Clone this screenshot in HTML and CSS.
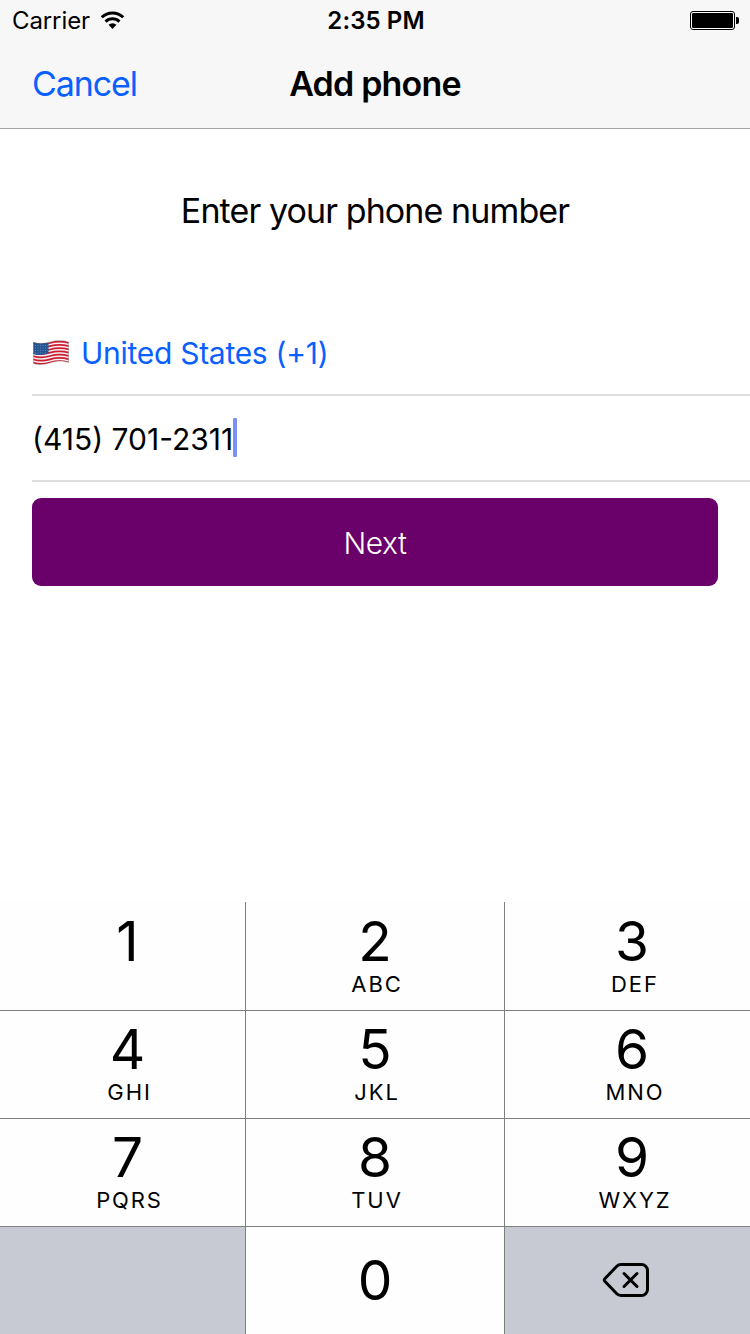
FILE: index.html
```html
<!DOCTYPE html>
<html lang="en">
<head>
<meta charset="utf-8">
<title>Add phone</title>
<link rel="stylesheet" href="styles.css">
</head>
<body>
<div class="screen">
  <header class="top">
    <div class="status">
      <div class="status-left">
        <span class="carrier">Carrier</span>
        <svg class="wifi" width="25" height="19" viewBox="0 0 26 20">
          <path d="M1.7 6.6a16.3 16.3 0 0 1 22.6 0" fill="none" stroke="#000" stroke-width="3.2"/>
          <path d="M5.700 11.1a10.6 10.6 0 0 1 14.6 0" fill="none" stroke="#000" stroke-width="3.2"/>
          <path d="M8.900 14.6a6 6 0 0 1 8.200 0L13 18.900z"/>
        </svg>
      </div>
      <span class="clock">2:35 PM</span>
      <svg class="battery" width="50" height="20" viewBox="0 0 50 20">
        <rect x=".5" y=".5" width="44" height="18" rx="2.5" fill="#fff" stroke="#000"/>
        <rect x="2" y="2" width="41" height="15" rx="1.2"/>
        <path d="M46 6h1a2 2 0 0 1 2 2v3a2 2 0 0 1-2 2h-1z"/>
      </svg>
    </div>
    <nav class="nav">
      <a class="cancel">Cancel</a>
      <h1 class="title">Add phone</h1>
    </nav>
  </header>
  <main class="form">
    <p class="prompt">Enter your phone number</p>
    <div class="row country">
      <svg class="flag" width="36" height="26" viewBox="0 0 36 26">
        <defs>
          <clipPath id="wave"><path d="M.5 2.300C6 4 11 3.800 17 2S29 0 35.500 2V22.500C29 20.500 24 20.800 18 22.600S6 25.500.5 23.500z"/></clipPath>
        </defs>
        <g clip-path="url(#wave)">
          <rect width="36" height="26" fill="#f4f1f2"/>
          <g fill="none" stroke="#d01c30" stroke-width="1.8">
            <path d="M0 3C6 5 11 4.800 17 3S29 1 36 3"/>
            <path d="M0 6.200C6 8.200 11 8 17 6.200S29 4.200 36 6.200"/>
            <path d="M0 9.500C6 11.500 11 11.300 17 9.500S29 7.500 36 9.500"/>
            <path d="M0 12.700C6 14.700 11 14.500 17 12.700S29 10.700 36 12.700"/>
            <path d="M0 16C6 18 11 17.800 17 16S29 14 36 16"/>
            <path d="M0 19.300C6 21.300 11 21.100 17 19.300S29 17.300 36 19.300"/>
            <path d="M0 22.600C6 24.600 11 24.400 17 22.600S29 20.600 36 22.600"/>
          </g>
          <path d="M0 0H15.500V13.600C10 15.200 5 15.400 0 14z" fill="#255493"/>
          <path d="M2 5.500H15M2 8H15M2 10.500H15M2 13H14" stroke="#86a4c9" stroke-width=".6" stroke-dasharray="1 1.500"/>
        </g>
        <path d="M.5 2.300C6 4 11 3.800 17 2S29 0 35.500 2V22.500C29 20.500 24 20.800 18 22.600S6 25.500.5 23.500z" fill="none" stroke="#555" stroke-opacity=".4" stroke-width=".8"/>
      </svg>
      <span class="country-name">United States (+1)</span>
    </div>
    <div class="row number"><span class="digits">(415) 701-2311</span><span class="caret"></span></div>
    <button class="next">Next</button>
  </main>
  <section class="keypad">
    <div class="key left first"><b>1</b></div>
    <div class="key mid first"><b>2</b><i>ABC</i></div>
    <div class="key right first"><b>3</b><i>DEF</i></div>
    <div class="key left"><b>4</b><i>GHI</i></div>
    <div class="key mid"><b>5</b><i>JKL</i></div>
    <div class="key right"><b>6</b><i>MNO</i></div>
    <div class="key left"><b>7</b><i>PQRS</i></div>
    <div class="key mid"><b>8</b><i>TUV</i></div>
    <div class="key right"><b>9</b><i>WXYZ</i></div>
    <div class="key left last gray"></div>
    <div class="key mid last"><b>0</b></div>
    <div class="key right last gray">
      <svg class="delete" width="48" height="36" viewBox="0 0 48 36" fill="none" stroke="#000" stroke-width="3" stroke-linecap="round" stroke-linejoin="round">
        <path d="M19 2.500H39.500a6 6 0 0 1 6 6V27.500a6 6 0 0 1-6 6H19q-2.500 0-4.200-1.700L2.800 19.200q-1.200-1.200 0-2.400L14.800 4.200Q16.500 2.500 19 2.500z"/>
        <path d="M22 11.500l13 13M35 11.500L22 24.500"/>
      </svg>
    </div>
  </section>
</div>
</body>
</html>
```
FILE: styles.css
```css
* { box-sizing: border-box; }
body { margin: 0; background: #fff; color: #000; font-family: Inter, "Liberation Sans", sans-serif; }
.screen { width: 750px; height: 1334px; display: flex; flex-direction: column; overflow: hidden; }

.top { height: 129px; background: #f7f7f7; border-bottom: 1px solid #a5a5a5; }
.status { height: 42px; padding: 0 10px 0 12px; display: grid; grid-template-columns: 1fr auto 1fr; align-items: center; font-size: 24px; line-height: 42px; }
.status-left { display: flex; align-items: center; }
.carrier { letter-spacing: -0.1px; }
.wifi { margin-left: 10px; margin-top: -1px; }
.clock { font-weight: 600; letter-spacing: 0.1px; }
.battery { justify-self: end; }
.nav { height: 84px; padding: 0 32px; display: grid; grid-template-columns: 1fr auto 1fr; align-items: center; font-size: 34px; line-height: 84px; }
.cancel { color: #0a60ff; letter-spacing: -1.1px; }
.title { margin: 0; font-size: 34px; font-weight: 600; letter-spacing: -0.8px; }

.form { flex: 1; padding-left: 32px; display: flex; flex-direction: column; }
.prompt { margin: 55px 32px 0 0; height: 53px; line-height: 53px; font-size: 34px; letter-spacing: -0.9px; text-align: center; }
.row { display: flex; align-items: center; height: 86px; border-bottom: 2px solid #dedede; font-size: 30px; white-space: nowrap; }
.country { margin-top: 73px; padding-top: 1px; color: #0a60ff; }
.flag { margin-left: 1px; }
.country-name { margin-left: 12px; letter-spacing: -0.28px; }
.digits { padding-top: 1px; }
.caret { width: 4px; height: 39px; margin-bottom: 2px; border-radius: 1px; background: #7b91f8; }
.next { margin: 16px 32px 0 0; padding: 2px 0 0; height: 88px; border: 0; border-radius: 9px; background: #6a006a; color: #fff; font-family: inherit; font-size: 30px; font-weight: 300; letter-spacing: -0.5px; }

.keypad { height: 432px; display: grid; grid-template-columns: 246px 259px 245px; grid-template-rows: repeat(4, 108px); }
.key { display: flex; flex-direction: column; align-items: center; border-top: 1px solid #7f7f7f; padding-top: 7px; background: #fefefe; }
.first { border-top: 0; padding-top: 8px; }
.left, .mid { border-right: 1px solid #7f7f7f; }
.left { padding-left: 12px; }
.mid { padding-left: 2px; }
.right { padding-left: 13px; }
.gray { background: #c8cad3; }
.key b { margin-right: 2px; font-size: 55px; font-weight: 400; line-height: 63px; height: 63px; }
.right b { margin-right: 4px; }
.key i { font-style: normal; font-size: 22px; line-height: 22px; letter-spacing: 1.9px; margin-right: -2px; }
.last { padding-top: 22px; }
.delete { margin: 13px 16px 0 0; }
```
